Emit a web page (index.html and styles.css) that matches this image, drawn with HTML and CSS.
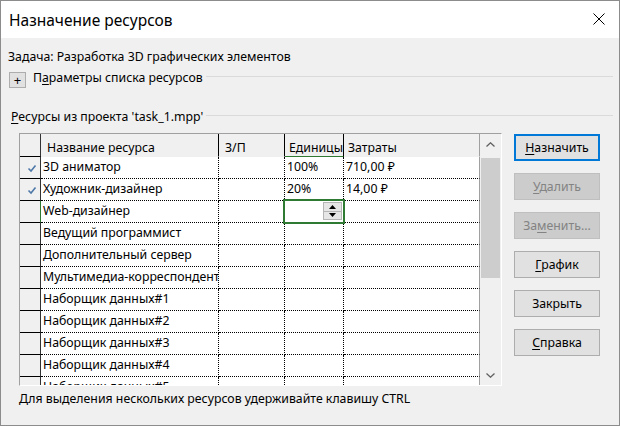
FILE: index.html
```html
<!DOCTYPE html>
<html lang="ru">
<head>
<meta charset="utf-8">
<title>Назначение ресурсов</title>
<link rel="stylesheet" href="styles.css">
</head>
<body>
<div class="window">
  <div class="titlebar">
    <span class="title">Назначение ресурсов</span>
    <svg class="close" width="12" height="12" viewBox="0 0 12 12"><path d="M0.5 0.5 L11.5 11.5 M11.5 0.5 L0.5 11.5" stroke="#000" stroke-width="1" fill="none"/></svg>
  </div>
  <div class="content">
    <div class="task">Задача: Разработка 3D графических элементов</div>
    <div class="group params">
      <div class="plus">+</div>
      <span class="glabel">П<u>а</u>раметры списка ресурсов</span>
      <div class="rule"></div>
    </div>
    <div class="group res">
      <span class="glabel"><u>Р</u>есурсы из проекта 'task_1.mpp'</span>
      <div class="rule"></div>
    </div>
    <div class="main">
      <div class="grid">
        <div class="cols">
          <div class="row hdr">
            <div class="h rh"></div>
            <div class="h name">Название ресурса</div>
            <div class="h zp">З/П</div>
            <div class="h units cur">Единицы</div>
            <div class="h cost">Затраты</div>
          </div>
          <div class="row">
            <div class="c rh"><svg class="chk" width="10" height="9" viewBox="0 0 10 9"><path d="M1.5 4.5 L4 7 L8.5 1.5" stroke="#4e78a8" stroke-width="1.6" fill="none"/></svg></div>
            <div class="c">3D аниматор</div><div class="c"></div><div class="c">100%</div><div class="c last">710,00 ₽</div>
          </div>
          <div class="row">
            <div class="c rh"><svg class="chk" width="10" height="9" viewBox="0 0 10 9"><path d="M1.5 4.5 L4 7 L8.5 1.5" stroke="#4e78a8" stroke-width="1.6" fill="none"/></svg></div>
            <div class="c">Художник-дизайнер</div><div class="c"></div><div class="c">20%</div><div class="c last">14,00 ₽</div>
          </div>
          <div class="row">
            <div class="c rh currow"></div>
            <div class="c">Web-дизайнер</div><div class="c"></div>
            <div class="c"><div class="active"><div class="spin"><div class="sp up"><svg width="7" height="4" viewBox="0 0 7 4"><path d="M0 4 L3.5 0 L7 4 Z" fill="#000"/></svg></div><div class="sp dn"><svg width="7" height="4" viewBox="0 0 7 4"><path d="M0 0 L3.5 4 L7 0 Z" fill="#000"/></svg></div></div></div></div>
            <div class="c last"></div>
          </div>
          <div class="row"><div class="c rh"></div><div class="c">Ведущий программист</div><div class="c"></div><div class="c"></div><div class="c last"></div></div>
          <div class="row"><div class="c rh"></div><div class="c">Дополнительный сервер</div><div class="c"></div><div class="c"></div><div class="c last"></div></div>
          <div class="row"><div class="c rh"></div><div class="c">Мультимедиа-корреспондент</div><div class="c"></div><div class="c"></div><div class="c last"></div></div>
          <div class="row"><div class="c rh"></div><div class="c">Наборщик данных#1</div><div class="c"></div><div class="c"></div><div class="c last"></div></div>
          <div class="row"><div class="c rh"></div><div class="c">Наборщик данных#2</div><div class="c"></div><div class="c"></div><div class="c last"></div></div>
          <div class="row"><div class="c rh"></div><div class="c">Наборщик данных#3</div><div class="c"></div><div class="c"></div><div class="c last"></div></div>
          <div class="row"><div class="c rh"></div><div class="c">Наборщик данных#4</div><div class="c"></div><div class="c"></div><div class="c last"></div></div>
          <div class="row"><div class="c rh"></div><div class="c">Наборщик данных#5</div><div class="c"></div><div class="c"></div><div class="c last"></div></div>
        </div>
        <div class="sb">
          <div class="arr"><svg width="9" height="5" viewBox="0 0 9 5"><path d="M0.5 4.5 L4.5 0.8 L8.5 4.5" stroke="#606060" stroke-width="1.3" fill="none"/></svg></div>
          <div class="thumb"></div>
          <div class="spacer"></div>
          <div class="arr"><svg width="9" height="5" viewBox="0 0 9 5"><path d="M0.5 0.5 L4.5 4.2 L8.5 0.5" stroke="#606060" stroke-width="1.3" fill="none"/></svg></div>
        </div>
      </div>
      <div class="btns">
        <div class="btn def"><span><u>Н</u>азначить</span></div>
        <div class="btn dis"><span><u>У</u>далить</span></div>
        <div class="btn dis"><span>За<u>м</u>енить...</span></div>
        <div class="btn"><span><u>Г</u>рафик</span></div>
        <div class="btn"><span>Закрыть</span></div>
        <div class="btn"><span><u>С</u>правка</span></div>
      </div>
    </div>
    <div class="hint">Для выделения нескольких ресурсов удерживайте клавишу CTRL</div>
  </div>
</div>
</body>
</html>
```
FILE: styles.css
```css
* { box-sizing: border-box; margin: 0; padding: 0; }
html, body { width: 620px; height: 426px; overflow: hidden; }
body {
  font-family: "Noto Sans", "Open Sans", sans-serif;
  font-size: 12.3px;
  color: #000;
  background: #fff;
}
u { text-decoration: underline; text-underline-offset: 2px; }

.window {
  width: 620px;
  height: 426px;
  border: 1px solid #8c8c8c;
  background: #f0f0f0;
  display: flex;
  flex-direction: column;
}
.titlebar {
  height: 37px;
  background: #fff;
  display: flex;
  align-items: center;
  padding-left: 8px;
  position: relative;
}
.title { font-size: 15.5px; }
.close { position: absolute; right: 14px; top: 12px; }

.content {
  flex: 1;
  padding: 11px 6px 0 7px;
  display: flex;
  flex-direction: column;
}
.task { height: 16px; line-height: 16px; }
.group { display: flex; align-items: center; height: 18px; line-height: 18px; }
.params { margin-top: 4px; }
.res { margin-top: 21px; padding-left: 3px; }
.plus {
  width: 17px;
  height: 16px;
  margin-left: 1px;
  margin-right: 7px;
  align-self: flex-start;
  margin-top: 3px;
  border: 1px solid #adadad;
  background: #e1e1e1;
  display: flex;
  align-items: center;
  justify-content: center;
  font-size: 13px;
  line-height: 1;
}
.glabel { white-space: nowrap; }
.rule {
  flex: 1;
  height: 1px;
  background: #dadada;
  align-self: flex-start;
  margin-top: 7px;
  margin-left: 3px;
}

.main { display: flex; margin-top: 7px; padding-left: 11px; }
.grid {
  width: 483px;
  height: 253px;
  border-top: 1px solid #a0a0a0;
  border-left: 1px solid #a0a0a0;
  border-right: 1px solid #fff;
  border-bottom: 1px solid #fff;
  background: #fff;
  display: flex;
}
.cols { width: 460px; height: 251px; overflow: hidden; }
.row {
  display: grid;
  grid-template-columns: 21px 178px 66px 59px 136px;
  height: 22px;
}
.row.hdr { height: 23px; }
.h {
  background: #f0f0f0;
  border-right: 1px solid #000;
  border-bottom: 1px solid #f0f0f0;
  display: flex;
  align-items: flex-end;
  line-height: 16px;
  padding-left: 6px;
  white-space: nowrap;
  overflow: hidden;
}
.h.rh { border-bottom-color: #000; border-right-color: #333; padding: 0; }
.h.units { padding-left: 4px; }
.h.cost { padding-left: 4px; border-right: 1px solid #a0a0a0; }
.h.cur { border-bottom: 1px solid #2f7a32; }

.c {
  border-right: 1px dotted #000;
  border-bottom: 1px dotted #000;
  line-height: 20px;
  padding-left: 2px;
  white-space: nowrap;
  overflow: hidden;
  position: relative;
}
.c.last { border-right: 1px solid #a0a0a0; }
.c.rh {
  background: #f0f0f0;
  border-right: 1px solid #333;
  border-bottom: 1px solid #000;
  padding: 0;
  overflow: visible;
}
.c.currow { border-right: 1px solid #2f7a32; }
.chk { position: absolute; left: 7px; top: 7px; }
.c:has(.active) { overflow: visible; z-index: 2; }
.active {
  position: absolute;
  left: -2px;
  right: -2px;
  top: -2px;
  bottom: -2px;
  border: 2px solid #2f7a32;
  background: #fff;
}
.spin {
  position: absolute;
  right: 1px;
  top: 1px;
  width: 19px;
  height: 18px;
  border: 1px solid #b5b5b5;
  display: flex;
  flex-direction: column;
  background: #ececec;
}
.sp {
  flex: 1;
  display: flex;
  align-items: center;
  justify-content: center;
  background: #e6e6e6;
}
.sp.up { border-bottom: 1px solid #b5b5b5; }
.sp svg { display: block; }

.sb {
  width: 21px;
  background: #f0f0f0;
  display: flex;
  flex-direction: column;
  align-items: center;
}
.arr { height: 20px; width: 100%; display: flex; align-items: center; justify-content: center; }
.arr svg { display: block; }
.thumb { width: 19px; height: 120px; margin-top: 4px; background: #cdcdcd; }
.spacer { flex: 1; }

.btns {
  margin-left: 12px;
  padding-top: 1px;
  display: flex;
  flex-direction: column;
  gap: 12px;
}
.btn {
  width: 86px;
  height: 27px;
  border: 1px solid #adadad;
  background: #e1e1e1;
  display: flex;
  align-items: center;
  justify-content: center;
  white-space: nowrap;
}
.btn.def { border: 2px solid #0078d7; }
.btn.dis { background: #cccccc; border-color: #bfbfbf; color: #838383; }

.hint { margin-top: 5px; padding-left: 11px; line-height: 16px; height: 16px; }
```
